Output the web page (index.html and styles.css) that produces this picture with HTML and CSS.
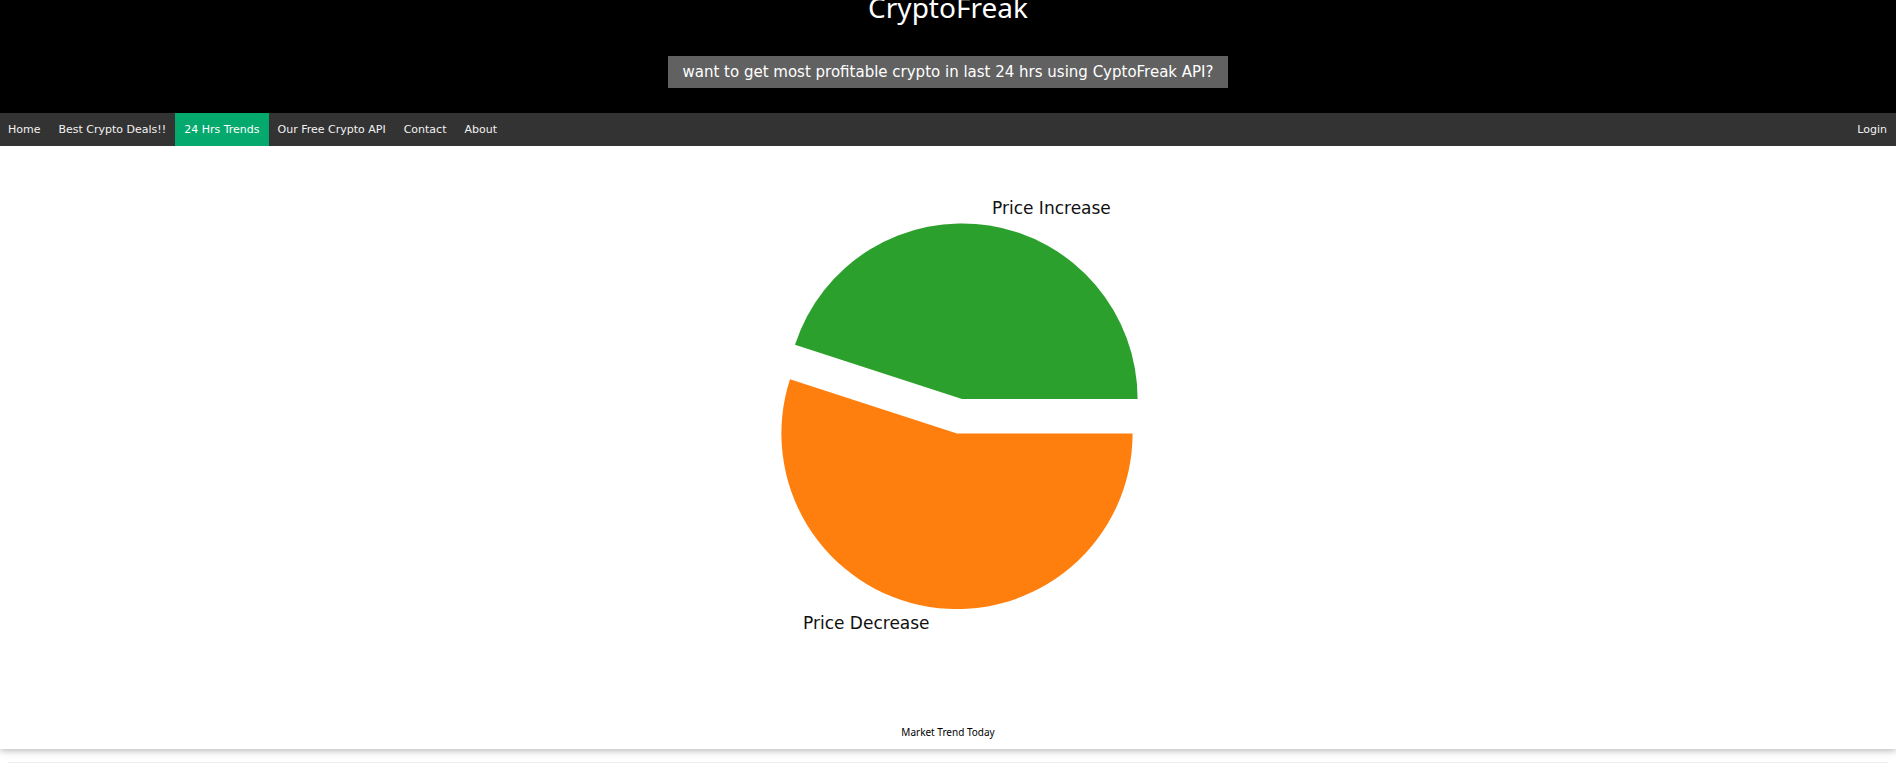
FILE: index.html
```html
<!DOCTYPE html>
<html lang="en">
<head>
<meta charset="utf-8">
<meta name="viewport" content="width=device-width, initial-scale=1">
<title>CryptoFreak</title>
<link rel="stylesheet" href="styles.css">
</head>
<body>
<header class="hero">
  <h1 class="hero-title">CryptoFreak</h1>
  <p class="hero-tag">want to get most profitable crypto in last 24 hrs using CyptoFreak API?</p>
</header>
<nav class="topnav">
  <a href="#home">Home</a>
  <a href="#deals">Best Crypto Deals!!</a>
  <a href="#trends" class="active" aria-current="page">24 Hrs Trends</a>
  <a href="#api">Our Free Crypto API</a>
  <a href="#contact">Contact</a>
  <a href="#about">About</a>
  <a href="#login" class="login">Login</a>
</nav>
<main>
  <figure class="card">
    <svg class="chart" viewBox="0 0 760 560" role="img" aria-label="Pie chart of price increase and decrease">
      <path fill="#2ca02c" d="M394 253H569.6A175.6 175.6 0 0 0 227 198.7Z"/>
      <path fill="#ff7f0e" d="M389 287.5L222 233.2A175.6 175.6 0 1 0 564.6 287.5Z"/>
      <text class="chart-label" x="424" y="68">Price Increase</text>
      <text class="chart-label" x="235" y="483">Price Decrease</text>
    </svg>
    <figcaption class="caption">Market Trend Today</figcaption>
  </figure>
  <hr class="rule">
</main>
</body>
</html>
```
FILE: styles.css
```css
* {
  box-sizing: border-box;
}

body {
  margin: 0;
  background: #fff;
  color: #000;
  font-family: "DejaVu Sans", Verdana, sans-serif;
  overflow: hidden;
}

.hero {
  display: flex;
  flex-direction: column;
  align-items: center;
  gap: 29px;
  padding-bottom: 25px;
  background: #000;
  color: #fff;
}

.hero-title {
  margin: -13px 0 0;
  font-family: "Noto Sans", "Segoe UI", sans-serif;
  font-size: 28px;
  font-weight: 400;
  line-height: 40px;
}

.hero-tag {
  margin: 0;
  padding: 1px 14px 0;
  background: #616161;
  font-size: 15px;
  line-height: 31px;
}

.topnav {
  display: flex;
  background: #333;
}

.topnav a {
  padding: 1px 9px 0;
  color: #f2f2f2;
  font-size: 11px;
  line-height: 32px;
  text-decoration: none;
}

.topnav a:first-child {
  padding-left: 8px;
}

.topnav .active {
  background: #04aa6d;
  color: #fff;
}

.topnav .login {
  margin-left: auto;
}

.card {
  display: flex;
  flex-direction: column;
  align-items: center;
  margin: 0;
  padding-bottom: 7px;
  box-shadow: 0 2px 5px rgba(0, 0, 0, 0.16), 0 2px 10px rgba(0, 0, 0, 0.12);
  clip-path: inset(0 0 -16px 0);
}

.chart {
  display: block;
  width: 760px;
  max-width: 100%;
}

.chart-label {
  font-size: 17px;
  fill: #111;
}

.caption {
  margin-top: 16px;
  font-family: "Noto Sans", Verdana, sans-serif;
  font-size: 10px;
  line-height: 20px;
}

.rule {
  margin: 13px 8px;
  border: 0;
  border-top: 1px solid #eee;
}
```
